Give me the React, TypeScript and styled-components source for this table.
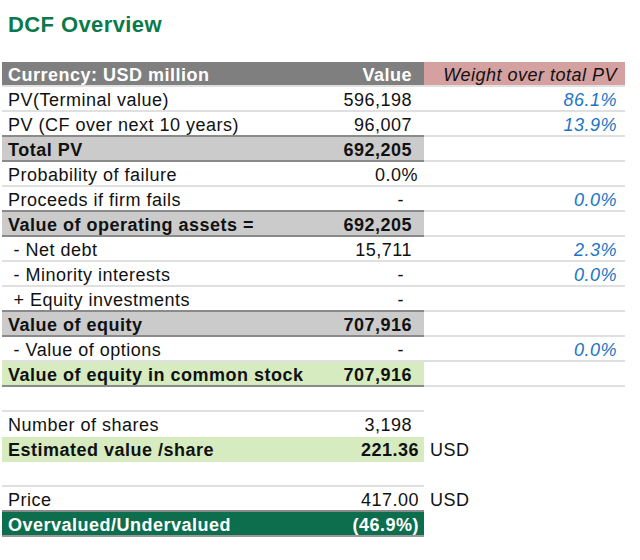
import React from "react";
import styled, { createGlobalStyle, css } from "styled-components";

const GlobalStyle = createGlobalStyle`
  body {
    margin: 0;
    background: #fff;
    font-family: "Liberation Sans", Arial, sans-serif;
  }
`;

type Kind = "header" | "plain" | "total" | "green" | "greenRuled" | "dark" | "open";
type WeightKind = "head" | "pct" | "blank" | "unit" | "none";

const LIGHT = "#e0e0e0";
const DARK = "#8a8a8a";

const kindStyles: Record<Kind, ReturnType<typeof css>> = {
  header: css`
    background: #7f7f7f;
    color: #fff;
    font-weight: bold;
    border-bottom-color: ${LIGHT};
  `,
  plain: css`
    border-bottom-color: ${LIGHT};
  `,
  total: css`
    background: #cbcbcb;
    font-weight: bold;
    border-bottom-color: ${DARK};
    box-shadow: 0 -2px 0 ${DARK};
  `,
  green: css`
    background: #d6ecc0;
    font-weight: bold;
  `,
  greenRuled: css`
    background: #d6ecc0;
    font-weight: bold;
    border-bottom-color: ${DARK};
  `,
  dark: css`
    background: #0d6e4e;
    color: #fff;
    font-weight: bold;
    border-bottom-color: #9a9a9a;
    box-shadow: 0 -2px 0 ${DARK};
  `,
  open: css`
    box-shadow: 0 -2px 0 ${LIGHT};
  `,
};

const Page = styled.div`
  padding: 12px 0 0 2px;
`;

const Title = styled.h1`
  margin: 0 0 24px 6px;
  font-size: 22px;
  line-height: 26px;
  font-weight: bold;
  letter-spacing: 0.4px;
  color: #0a7a4a;
`;

const Table = styled.div`
  width: 623px;
  font-size: 18px;
  letter-spacing: 0.5px;
  color: #111;
`;

const Row = styled.div`
  display: grid;
  grid-template-columns: 314px 108px 201px;
  height: 25px;
`;

const Spacer = styled.div`
  height: 25px;
`;

const Cell = styled.div<{ $kind: Kind }>`
  box-sizing: border-box;
  height: 25px;
  padding: 4px 0 0 6px;
  line-height: 19px;
  white-space: pre;
  border-bottom: 2px solid transparent;
  ${({ $kind }) => kindStyles[$kind]}
`;

const Value = styled(Cell)<{ $pad: number }>`
  padding-left: 0;
  padding-right: ${({ $pad }) => $pad}px;
  text-align: right;
`;

const Weight = styled.div<{ $kind: WeightKind }>`
  box-sizing: border-box;
  height: 25px;
  padding: 4px 8px 0 6px;
  line-height: 19px;
  border-bottom: 2px solid transparent;
  text-align: right;

  ${({ $kind }) =>
    $kind === "head" &&
    css`
      background: #d5a0a0;
      font-style: italic;
      border-bottom-color: ${LIGHT};
    `}
  ${({ $kind }) =>
    $kind === "pct" &&
    css`
      color: #1c74c6;
      font-style: italic;
      border-bottom-color: ${LIGHT};
    `}
  ${({ $kind }) =>
    $kind === "blank" &&
    css`
      border-bottom-color: ${LIGHT};
    `}
  ${({ $kind }) =>
    $kind === "unit" &&
    css`
      text-align: left;
    `}
`;

type Line = {
  label: string;
  value?: string;
  pad?: number;
  kind: Kind;
  weight?: string;
  wk?: WeightKind;
};

const top: Line[] = [
  { label: "Currency: USD million", value: "Value", kind: "header", weight: "Weight over total PV", wk: "head" },
  { label: "PV(Terminal value)", value: "596,198", kind: "plain", weight: "86.1%", wk: "pct" },
  { label: "PV (CF over next 10 years)", value: "96,007", kind: "plain", weight: "13.9%", wk: "pct" },
  { label: "Total PV", value: "692,205", kind: "total", wk: "blank" },
  { label: "Probability of failure", value: "0.0%", pad: 6, kind: "plain", wk: "blank" },
  { label: "Proceeds if firm fails", value: "-", pad: 20, kind: "plain", weight: "0.0%", wk: "pct" },
  { label: "Value of operating assets =", value: "692,205", kind: "total", wk: "blank" },
  { label: " - Net debt", value: "15,711", kind: "plain", weight: "2.3%", wk: "pct" },
  { label: " - Minority interests", value: "-", pad: 20, kind: "plain", weight: "0.0%", wk: "pct" },
  { label: " + Equity investments", value: "-", pad: 20, kind: "plain", wk: "blank" },
  { label: "Value of equity", value: "707,916", kind: "total", wk: "blank" },
  { label: " - Value of options", value: "-", pad: 20, kind: "plain", weight: "0.0%", wk: "pct" },
  { label: "Value of equity in common stock", value: "707,916", kind: "greenRuled", wk: "blank" },
];

const shares: Line[] = [
  { label: "Number of shares", value: "3,198", kind: "open", wk: "none" },
  { label: "Estimated value /share", value: "221.36", pad: 5, kind: "green", weight: "USD", wk: "unit" },
];

const price: Line[] = [
  { label: "Price", value: "417.00", pad: 5, kind: "open", weight: "USD", wk: "unit" },
  { label: "Overvalued/Undervalued", value: "(46.9%)", pad: 5, kind: "dark", wk: "none" },
];

const renderRows = (lines: Line[]) =>
  lines.map((l) => (
    <Row key={l.label}>
      <Cell $kind={l.kind}>{l.label}</Cell>
      <Value $kind={l.kind} $pad={l.pad ?? 12}>
        {l.value}
      </Value>
      <Weight $kind={l.wk ?? "none"}>{l.weight}</Weight>
    </Row>
  ));

const App = () => {
  return (
    <Page>
      <GlobalStyle />
      <Title>DCF Overview</Title>
      <Table>
        {renderRows(top)}
        <Spacer />
        {renderRows(shares)}
        <Spacer />
        {renderRows(price)}
      </Table>
    </Page>
  );
};

export default App;
